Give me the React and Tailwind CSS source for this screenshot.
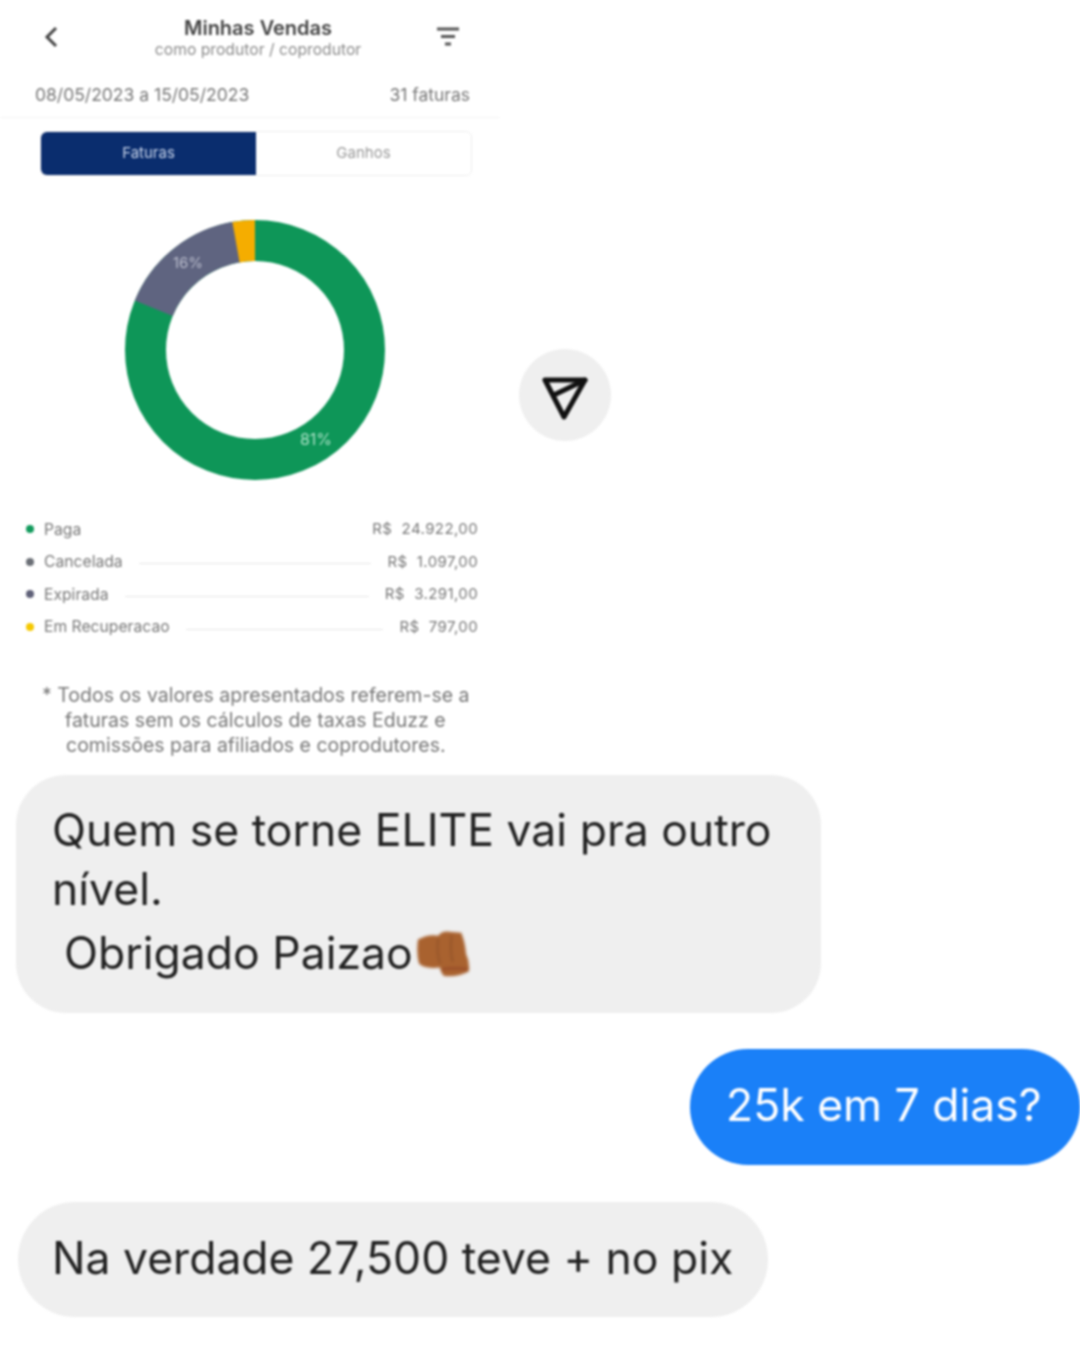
import React from "react";

const legend = [
  { label: "Paga", value: "R$  24.922,00", dot: "bg-[#119a5c]", line: false },
  { label: "Cancelada", value: "R$  1.097,00", dot: "bg-[#6b6f76]", line: true },
  { label: "Expirada", value: "R$  3.291,00", dot: "bg-[#5f6178]", line: true },
  { label: "Em Recuperacao", value: "R$  797,00", dot: "bg-[#f5c800]", line: true },
];

function Donut() {
  return (
    <svg width="260" height="260" viewBox="0 0 260 260" className="block">
      <circle cx="130" cy="130" r="109.5" fill="none" stroke="#0e9658" strokeWidth="41" />
      <path d="M 28.7 88.3 A 109.5 109.5 0 0 1 112.9 21.8" fill="none" stroke="#5f6480" strokeWidth="41" />
      <path d="M 111 22.2 A 109.5 109.5 0 0 1 130 20.5" fill="none" stroke="#f5ad00" strokeWidth="41" />
      <text x="63" y="48" fontSize="15" fill="#b9bccb" textAnchor="middle" fontFamily="Inter, sans-serif">16%</text>
      <text x="191" y="225" fontSize="16" fill="#a8e0c4" textAnchor="middle" fontFamily="Inter, sans-serif">81%</text>
    </svg>
  );
}

function SendIcon() {
  return (
    <svg width="48" height="44" viewBox="0 0 48 44" fill="none" stroke="#111" strokeWidth="5" strokeLinejoin="round" strokeLinecap="round" className="mt-[6px]">
      <path d="M4 4 H44 L23 41 Z" />
      <path d="M44 4 L15 18" />
    </svg>
  );
}

function Fist() {
  return (
    <svg width="60" height="50" viewBox="0 0 58 52" className="shrink-0 mt-[2px] blur-[1.2px]">
      <path d="M3 11 Q14 5 24 7 Q28 1 38 3 L48 4 Q52 14 53 26 Q57 34 56 44 Q46 50 30 49 Q26 44 26 40 Q10 42 4 36 Q1 24 3 11 Z" fill="#a9622f" />
      <path d="M24 10 Q22 24 26 36 M38 7 Q36 22 39 34" stroke="#95552a" strokeWidth="2" fill="none" />
      <path d="M28 42 Q42 40 54 42" stroke="#9a4f2a" strokeWidth="3" fill="none" />
    </svg>
  );
}

export default function App() {
  return (
    <div className="w-[1080px] h-[1350px] bg-white overflow-hidden font-['Inter',sans-serif]">
      <div className="flex h-[775px]">
        <div className="w-[519px] shrink-0 blur-[1.2px]">
          <div className="w-[500px] flex items-center h-[74px] pl-[44px] pr-[38px]">
            <svg width="14" height="22" viewBox="0 0 14 22" fill="none" stroke="#444" strokeWidth="3">
              <path d="M12 2 L3 11 L12 20" />
            </svg>
            <div className="flex-1 text-center ml-[24px] whitespace-nowrap pt-[1px]">
              <div className="text-[20px] leading-[24px] font-semibold text-[#444]">Minhas Vendas</div>
              <div className="text-[15.7px] leading-[20px] text-[#8b8b8b]">como produtor / coprodutor</div>
            </div>
            <svg width="28" height="24" viewBox="0 0 28 24" stroke="#555" strokeWidth="3">
              <path d="M3 4 H25 M7 11.5 H21 M11 19 H17" />
            </svg>
          </div>
          <div className="w-[500px] h-[44px] flex items-center justify-between pl-[35px] pr-[30px] border-b border-[#f4f4f4] text-[17.5px] text-[#777]">
            <span>08/05/2023 a 15/05/2023</span>
            <span>31 faturas</span>
          </div>
          <div className="ml-[40px] mt-[13px] w-[432px] h-[45px] flex rounded-md border border-[#eeeeee] text-[15px]">
            <div className="w-[215px] bg-[#0a2d6e] text-[#c8d4ea] rounded-l-md flex items-center justify-center">Faturas</div>
            <div className="flex-1 text-[#999] flex items-center justify-center">Ganhos</div>
          </div>
          <div className="ml-[125px] mt-[44px]">
            <Donut />
          </div>
          <div className="mt-[33px] w-[478px] pl-[26px] text-[15.7px] text-[#777]">
            {legend.map((row) => (
              <div key={row.label} className="flex items-center h-[32.6px]">
                <span className={"w-[8px] h-[8px] rounded-full mr-[10px] " + row.dot}></span>
                <span>{row.label}</span>
                {row.line ? <span className="flex-1 h-px bg-[#e6e6e6] mx-[16px] mt-[4px]"></span> : <span className="flex-1"></span>}
                <span className="whitespace-pre text-[15px] tracking-[0.4px]">{row.value}</span>
              </div>
            ))}
          </div>
          <div className="mt-[40px] w-[478px] pl-[42px] text-[19.5px] leading-[25px] text-[#777] whitespace-nowrap">
            <div>* Todos os valores apresentados referem-se a</div>
            <div className="pl-[23px]">faturas sem os cálculos de taxas Eduzz e</div>
            <div className="pl-[24px]">comissões para afiliados e coprodutores.</div>
          </div>
        </div>
        <div className="mt-[349px] w-[92px] h-[92px] rounded-full bg-[#efefef] flex items-center justify-center blur-[0.8px]">
          <SendIcon />
        </div>
      </div>

      <div className="blur-[0.8px] text-[44.5px] text-[#222]">
        <div className="ml-[16px] w-[805px] h-[238px] bg-[#efefef] rounded-[50px] pl-[36px] pt-[25px]">
          <div className="leading-[60px] whitespace-nowrap">Quem se torne ELITE vai pra outro</div>
          <div className="leading-[58px]">nível.</div>
          <div className="flex items-center pl-[12px] h-[64px] mt-[3px] whitespace-nowrap">
            Obrigado Paizao
            <Fist />
          </div>
        </div>
        <div className="flex justify-end mt-[36px]">
          <div className="w-[390px] h-[116px] bg-[#1a80f8] text-white rounded-[58px] flex items-center pl-[36px] pb-[3px]">25k em 7 dias?</div>
        </div>
        <div className="ml-[18px] mt-[37px] w-[750px] h-[115px] bg-[#efefef] rounded-[57px] flex items-center pl-[34px] pb-[3px]">
          Na verdade 27,500 teve + no pix
        </div>
      </div>
    </div>
  );
}
